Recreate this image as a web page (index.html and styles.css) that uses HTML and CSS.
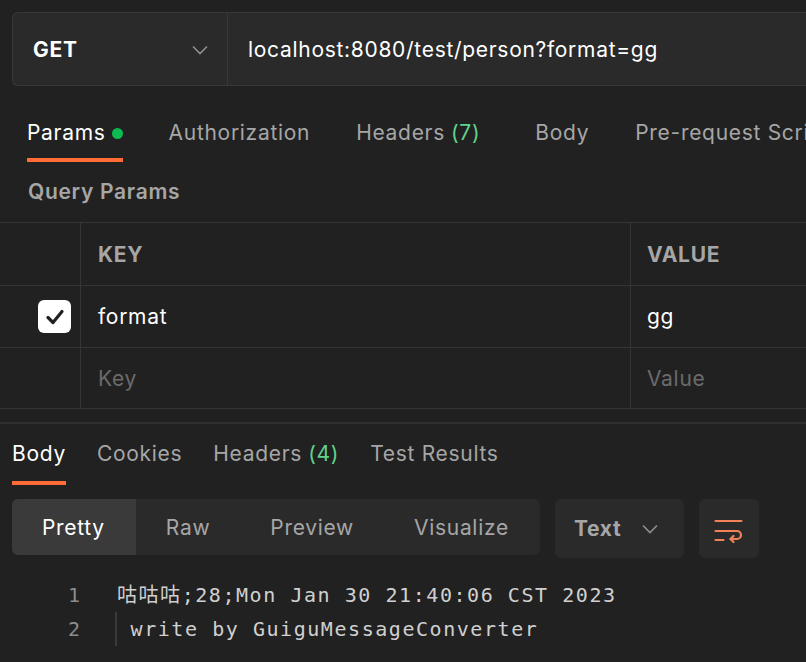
FILE: index.html
```html
<!DOCTYPE html>
<html>
<head>
<meta charset="utf-8">
<link rel="stylesheet" href="styles.css">
</head>
<body>
<div class="page">
  <div class="urlbar">
    <div class="method">
      <span class="method-name">GET</span>
      <svg class="chev" width="16" height="10" viewBox="0 0 16 10"><path d="M1 1.5 L8 8.5 L15 1.5" fill="none" stroke="#8f8f8f" stroke-width="1.6"/></svg>
    </div>
    <div class="url">localhost:8080/test/person?format=gg</div>
  </div>

  <div class="tabs req-tabs">
    <div class="tab active">Params <span class="dot"></span></div>
    <div class="tab">Authorization</div>
    <div class="tab">Headers <span class="count">(7)</span></div>
    <div class="tab body-tab">Body</div>
    <div class="tab">Pre-request Script</div>
  </div>

  <div class="section-title">Query Params</div>

  <div class="params">
    <div class="row head">
      <div class="cell check"></div>
      <div class="cell key">KEY</div>
      <div class="cell val">VALUE</div>
    </div>
    <div class="row">
      <div class="cell check">
        <span class="checkbox"><svg width="22" height="22" viewBox="0 0 22 22"><path d="M4 11.5 L9 16.5 L18 5.5" fill="none" stroke="#212121" stroke-width="3.2" stroke-linecap="round" stroke-linejoin="round"/></svg></span>
      </div>
      <div class="cell key filled">format</div>
      <div class="cell val filled">gg</div>
    </div>
    <div class="row last">
      <div class="cell check"></div>
      <div class="cell key ph">Key</div>
      <div class="cell val ph">Value</div>
    </div>
  </div>

  <div class="divider"></div>

  <div class="tabs res-tabs">
    <div class="tab active">Body</div>
    <div class="tab">Cookies</div>
    <div class="tab">Headers <span class="count">(4)</span></div>
    <div class="tab">Test Results</div>
  </div>

  <div class="toolbar">
    <div class="segmented">
      <div class="seg selected">Pretty</div>
      <div class="seg">Raw</div>
      <div class="seg">Preview</div>
      <div class="seg">Visualize</div>
    </div>
    <div class="format">
      <span>Text</span>
      <svg width="16" height="10" viewBox="0 0 16 10"><path d="M1 1.5 L8 8.5 L15 1.5" fill="none" stroke="#8f8f8f" stroke-width="1.6"/></svg>
    </div>
    <div class="wrap">
      <svg width="30" height="32" viewBox="0 0 30 32"><g fill="none" stroke="#f0825a" stroke-width="2.2" stroke-linecap="round" stroke-linejoin="round"><path d="M1.5 8 H27.5"/><path d="M1.5 18 H23 A4 4 0 0 1 23 26 H16.5"/><path d="M19.5 23 L16.5 26 L19.5 29"/><path d="M1.5 27 H9.5"/></g></svg>
    </div>
  </div>

  <div class="code">
    <div class="line"><span class="ln">1</span><span class="txt">咕咕咕;28;Mon Jan 30 21:40:06 CST 2023</span></div>
    <div class="line"><span class="ln">2</span><span class="txt indent"> write by GuiguMessageConverter</span></div>
  </div>
</div>
</body>
</html>
```

FILE: styles.css
```css
html, body {
  margin: 0;
  padding: 0;
  background: #212121;
}
body {
  font-family: Inter, "Noto Sans", sans-serif;
  color: #a6a6a6;
  width: 806px;
  height: 662px;
  overflow: hidden;
}
.page {
  width: 806px;
  font-size: 21px;
  letter-spacing: 0.7px;
}

/* URL bar */
.urlbar {
  margin: 12px 0 0 12px;
  height: 72px;
  display: flex;
  border: 1px solid #383838;
  border-right: none;
  border-radius: 6px 0 0 6px;
  background: #2a2a2a;
  width: 820px;
}
.method {
  width: 215px;
  box-sizing: border-box;
  border-right: 1px solid #383838;
  display: flex;
  align-items: center;
  justify-content: space-between;
  padding: 0 19px 0 20px;
}
.method-name {
  color: #ffffff;
  font-weight: 700;
  font-size: 21px;
}
.chev {
  margin-top: 2px;
}
.url {
  display: flex;
  align-items: center;
  padding-left: 20px;
  color: #ffffff;
  white-space: nowrap;
}

/* Tabs */
.tabs {
  display: flex;
  white-space: nowrap;
}
.tab {
  line-height: 28px;
  color: #a6a6a6;
  border-bottom: 4px solid transparent;
  display: flex;
  align-items: center;
}
.tab.active {
  color: #ffffff;
  border-bottom-color: #ff6c37;
}
.count {
  color: #5fd38d;
  margin-left: 6px;
}
.req-tabs {
  padding-left: 27px;
  gap: 46px;
}
.req-tabs .tab {
  padding: 33px 0 11px;
}
.req-tabs .body-tab {
  margin-left: 9px;
}
.dot {
  display: inline-block;
  width: 11px;
  height: 11px;
  border-radius: 50%;
  background: #0cbb52;
  margin-left: 6px;
}

.section-title {
  padding: 18px 0 0 28px;
  line-height: 24px;
  font-weight: 600;
  color: #a6a6a6;
  margin-bottom: 18px;
}

/* Params table */
.params {
  border-top: 1px solid #353535;
}
.row {
  display: grid;
  grid-template-columns: 80px 550px 1fr;
  height: 61px;
  border-bottom: 1px solid #353535;
}
.row.head {
  height: 62px;
}
.row.last {
  height: 60px;
}
.cell {
  display: flex;
  align-items: center;
}
.cell.key, .cell.val {
  border-left: 1px solid #353535;
  padding-left: 17px;
}
.cell.val {
  padding-left: 16px;
}
.head .cell {
  font-weight: 700;
  color: #a6a6a6;
}
.cell.filled {
  color: #ffffff;
}
.cell.ph {
  color: #6b6b6b;
}
.cell.check {
  justify-content: flex-end;
  padding-right: 9px;
}
.checkbox {
  width: 33px;
  height: 33px;
  background: #ffffff;
  border-radius: 6px;
  display: flex;
  align-items: center;
  justify-content: center;
}

.divider {
  margin-top: 13px;
  height: 2px;
  background: #2f2f2f;
}

.res-tabs {
  padding-left: 12px;
  gap: 31px;
}
.res-tabs .tab {
  padding: 16px 0 13px;
}

/* Toolbar */
.toolbar {
  display: flex;
  align-items: flex-start;
  gap: 15px;
  margin: 14px 0 0 12px;
}
.segmented {
  display: flex;
  width: 528px;
  height: 56px;
  background: #2a2a2a;
  border-radius: 6px;
  overflow: hidden;
}
.seg {
  display: flex;
  align-items: center;
  padding: 0 30px;
  color: #a6a6a6;
}
.seg.selected {
  background: #3a3a3a;
  color: #ffffff;
  padding: 0 31px 0 30px;
}
.format {
  width: 129px;
  height: 59px;
  box-sizing: border-box;
  background: #2a2a2a;
  border-radius: 6px;
  display: flex;
  align-items: center;
  justify-content: space-between;
  padding: 0 26px 0 19px;
  font-weight: 700;
  color: #a6a6a6;
}
.wrap {
  width: 60px;
  height: 59px;
  background: #2a2a2a;
  border-radius: 6px;
  display: flex;
  align-items: center;
  justify-content: center;
}

/* Code */
.code {
  margin-top: 20px;
  font-family: "DejaVu Sans Mono", "Noto Sans CJK SC", monospace;
  font-size: 20px;
  letter-spacing: 1.55px;
}
.line {
  display: flex;
  height: 34px;
  line-height: 34px;
  white-space: pre;
}
.ln {
  width: 80px;
  text-align: right;
  padding-right: 37px;
  box-sizing: content-box;
  color: #8c8c8c;
  letter-spacing: 0;
}
.txt {
  color: #d0d0d0;
}
.txt.indent {
  border-left: 2px solid #3a3a3a;
  margin-left: -2px;
}
```
